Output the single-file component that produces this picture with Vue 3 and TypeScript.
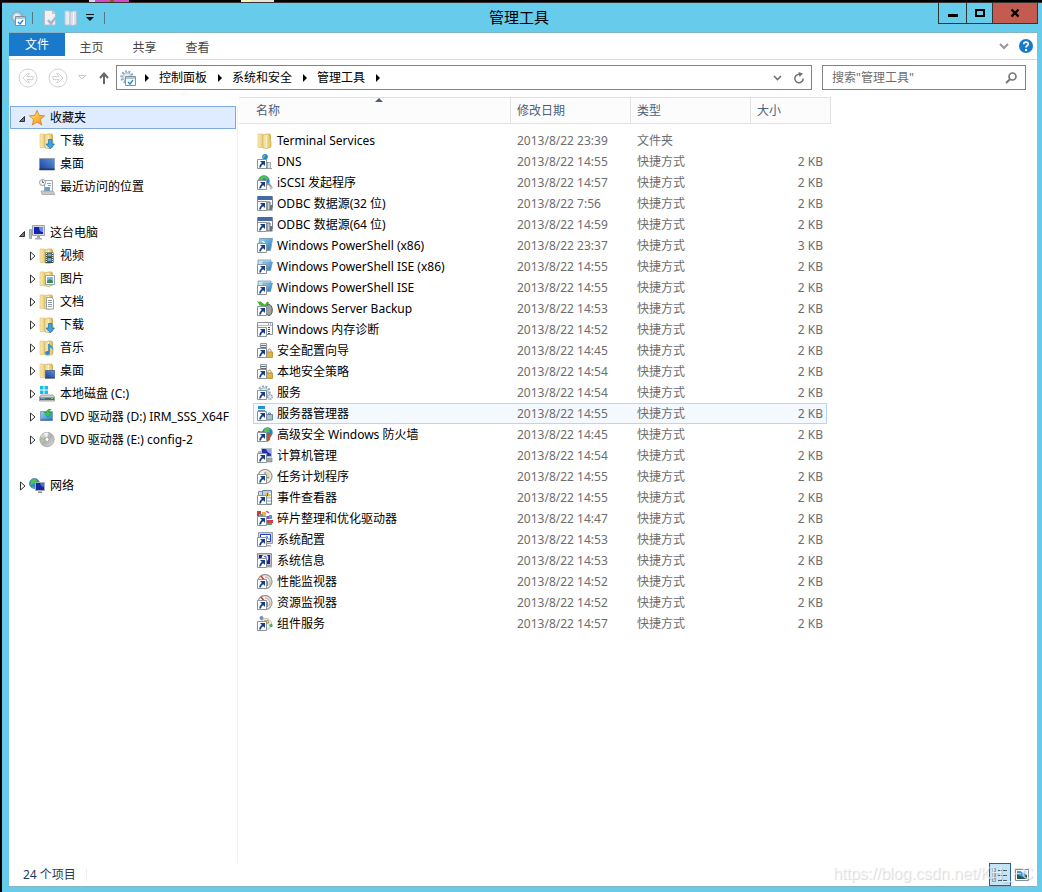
<script setup lang="ts">
import { ref } from 'vue'

interface TreeNode {
  id: string
  label: string
  icon: string
}

interface TreeGroup extends TreeNode {
  open: boolean
  expandable: boolean
  children: TreeNode[]
}

interface FileItem {
  name: string
  date: string
  icon: string
  kind: 'folder' | 'shortcut'
  size: string
}

const tabs = ['主页', '共享', '查看']
const crumbs = ['控制面板', '系统和安全', '管理工具']
const query = ref('')
const selectedNode = ref('fav')
const selectedFile = ref('服务器管理器')

const groups: TreeGroup[] = [
  {
    id: 'fav',
    label: '收藏夹',
    icon: 'star',
    open: true,
    expandable: false,
    children: [
      { id: 'fav-dl', label: '下载', icon: 'f-download' },
      { id: 'fav-desk', label: '桌面', icon: 'desktop' },
      { id: 'fav-recent', label: '最近访问的位置', icon: 'recent' },
    ],
  },
  {
    id: 'pc',
    label: '这台电脑',
    icon: 'pc',
    open: true,
    expandable: true,
    children: [
      { id: 'video', label: '视频', icon: 'f-video' },
      { id: 'pic', label: '图片', icon: 'f-picture' },
      { id: 'doc', label: '文档', icon: 'f-doc' },
      { id: 'dl', label: '下载', icon: 'f-download' },
      { id: 'music', label: '音乐', icon: 'f-music' },
      { id: 'desk', label: '桌面', icon: 'f-desktop' },
      { id: 'c', label: '本地磁盘 (C:)', icon: 'disk' },
      { id: 'd', label: 'DVD 驱动器 (D:) IRM_SSS_X64F', icon: 'dvd-setup' },
      { id: 'e', label: 'DVD 驱动器 (E:) config-2', icon: 'dvd' },
    ],
  },
  { id: 'net', label: '网络', icon: 'network', open: false, expandable: true, children: [] },
]

const shortcut = (name: string, time: string, icon: string, size = '2 KB'): FileItem => ({
  name,
  date: `2013/8/22 ${time}`,
  icon,
  kind: 'shortcut',
  size,
})

const files: FileItem[] = [
  { name: 'Terminal Services', date: '2013/8/22 23:39', icon: 'folder', kind: 'folder', size: '' },
  shortcut('DNS', '14:55', 'dns'),
  shortcut('iSCSI 发起程序', '14:57', 'iscsi'),
  shortcut('ODBC 数据源(32 位)', '7:56', 'odbc'),
  shortcut('ODBC 数据源(64 位)', '14:59', 'odbc'),
  shortcut('Windows PowerShell (x86)', '23:37', 'ps', '3 KB'),
  shortcut('Windows PowerShell ISE (x86)', '14:55', 'ise'),
  shortcut('Windows PowerShell ISE', '14:55', 'ise'),
  shortcut('Windows Server Backup', '14:53', 'backup'),
  shortcut('Windows 内存诊断', '14:52', 'memory'),
  shortcut('安全配置向导', '14:45', 'lock'),
  shortcut('本地安全策略', '14:54', 'lock'),
  shortcut('服务', '14:54', 'services'),
  shortcut('服务器管理器', '14:55', 'server'),
  shortcut('高级安全 Windows 防火墙', '14:45', 'firewall'),
  shortcut('计算机管理', '14:54', 'manage'),
  shortcut('任务计划程序', '14:55', 'clock'),
  shortcut('事件查看器', '14:55', 'event'),
  shortcut('碎片整理和优化驱动器', '14:47', 'defrag'),
  shortcut('系统配置', '14:53', 'config'),
  shortcut('系统信息', '14:53', 'info'),
  shortcut('性能监视器', '14:52', 'gauge'),
  shortcut('资源监视器', '14:52', 'gauge'),
  shortcut('组件服务', '14:57', 'component'),
]
</script>

<template>
  <div class="screen">
    <svg class="sprite" aria-hidden="true">
      <defs>
        <linearGradient id="gold" x1="0" x2="1"><stop offset="0" stop-color="#f9ecb8" /><stop offset="1" stop-color="#e2c468" /></linearGradient>
        <linearGradient id="blue" x1="0" y1="1" x2="1" y2="0"><stop offset="0" stop-color="#1c3f94" /><stop offset="1" stop-color="#5b94e6" /></linearGradient>
        <linearGradient id="cyan" x1="0" y1="0" x2="1" y2="1"><stop offset="0" stop-color="#9bd6f2" /><stop offset="1" stop-color="#1f78c4" /></linearGradient>
        <linearGradient id="starfill" x1="0" y1="0" x2="1" y2="1"><stop offset="0" stop-color="#fff3a0" /><stop offset=".5" stop-color="#ffbe3c" /><stop offset="1" stop-color="#f08018" /></linearGradient>
        <linearGradient id="metal" x1="0" y1="0" x2="1" y2="1"><stop offset="0" stop-color="#f4f4f4" /><stop offset=".5" stop-color="#b0b0b0" /><stop offset="1" stop-color="#dedede" /></linearGradient>

        <symbol id="arrow" viewBox="0 0 16 16">
          <path d="M.5 5.500h9v9h-9z" fill="#fff" stroke="#8d9299" />
          <path d="M3 7h5v5z" fill="#143f86" />
          <path d="M6.500 9C4.500 9.800 3.300 11 3 13.500" fill="none" stroke="#143f86" stroke-width="1.700" />
        </symbol>
        <symbol id="folder" viewBox="0 0 16 16">
          <path d="M1 1h4l2 1v12.500H1z" fill="url(#gold)" stroke="#dfc26b" stroke-width=".6" />
          <path d="M6 2l3-1h4v6l1 1v6l-4 1.500-4-.5z" fill="url(#gold)" stroke="#c9a548" stroke-width=".6" />
          <path d="M9.500 2v13" stroke="#fff2bf" />
          <path d="M12 2h1.500v5" stroke="#d3b256" fill="none" />
        </symbol>
        <symbol id="f-download" viewBox="0 0 16 16">
          <use href="#folder" /><path d="M9.500 6.500h3.500v4.500h2.500L11.300 15.800 7 11h2.500z" fill="#37a5ea" stroke="#1669ad" stroke-width=".7" />
        </symbol>
        <symbol id="f-video" viewBox="0 0 16 16">
          <use href="#folder" /><path d="M6.500 4.500h8v10.500h-8z" fill="#3b4248" />
          <path d="M8.500 5.500h4v3.500h-4zM8.500 10h4v4h-4z" fill="#6ba9d3" /><path d="M8.500 8h4v1h-4zM8.500 13h4v1h-4z" fill="#476b35" />
          <path d="M7.500 5v10M13.500 5v10" stroke="#e6e6e6" stroke-dasharray="1 1" />
        </symbol>
        <symbol id="f-picture" viewBox="0 0 16 16">
          <use href="#folder" /><path d="M6.500 4.500h9v9h-9z" fill="#fff" stroke="#8ba7b7" />
          <path d="M8 6h6v6H8z" fill="#79bbe7" /><path d="M8 10l3-2 3 2v2H8z" fill="#448954" />
        </symbol>
        <symbol id="f-doc" viewBox="0 0 16 16">
          <use href="#folder" /><path d="M7.500 3.500h5l2 2v9.500h-7z" fill="#fff" stroke="#9aa4aa" />
          <path d="M9 6.500h4M9 8.500h4M9 10.500h4M9 12.500h4" stroke="#8e9ba3" />
        </symbol>
        <symbol id="f-music" viewBox="0 0 16 16">
          <use href="#folder" /><path d="M10 4v8" stroke="#1676c5" stroke-width="1.500" /><path d="M10 3c1 2.500 5 3 4 7-1-2-2.500-2.500-4-3z" fill="#2e9ee8" /><ellipse cx="8.500" cy="13" rx="2.500" ry="2" fill="#2389d8" />
        </symbol>
        <symbol id="f-desktop" viewBox="0 0 16 16">
          <use href="#folder" /><path d="M6.500 7.500h9v7h-9z" fill="url(#blue)" stroke="#53719c" /><path d="M6 15h10" stroke="#182b4d" />
        </symbol>
        <symbol id="desktop" viewBox="0 0 16 16">
          <path d="M.5 2.500h15v11.500H.5z" fill="url(#blue)" stroke="#8f9eb4" /><path d="M.5 12.500h15v1.500H.5z" fill="#223e6b" />
        </symbol>
        <symbol id="recent" viewBox="0 0 16 16">
          <path d="M5.500 1.500h8v11h-8z" fill="#f5f8fa" stroke="#a4abb0" /><path d="M8 4.500h4M9 6.500h3" stroke="#92a4b5" /><path d="M6 8h5v4H6z" fill="#62a5d3" />
          <path d="M2 12h12l2 3.500H3z" fill="#c4c8cb" stroke="#8e9498" stroke-width=".6" />
          <circle cx="3.500" cy="3.500" r="3" fill="#f6f6f6" stroke="#929a9f" /><path d="M3.500 1.500v2H5" fill="none" stroke="#646d75" />
        </symbol>
        <symbol id="star" viewBox="0 0 16 16">
          <path d="M8 .3l2.100 5 5.500.5-4.200 3.700 1.300 5.500L8 12.100l-4.700 2.900 1.300-5.500L.4 5.800l5.500-.5z" fill="url(#starfill)" stroke="#d57b20" stroke-width=".8" />
        </symbol>
        <symbol id="pc" viewBox="0 0 16 16">
          <path d="M.5 4.500h2v9h-2z" fill="#b7bdc3" stroke="#83898f" stroke-width=".7" /><path d="M.5 8h2" stroke="#61d044" />
          <path d="M3.500.5h12v10h-12z" fill="#d5d8dc" stroke="#9da3aa" /><path d="M5 2h9v7H5z" fill="#1624b2" /><path d="M10 2h4v5c-2 0-4-1-4-5z" fill="#738ce5" />
          <path d="M8 11h3v2h2v1.500H6V13h2z" fill="#a5abb1" />
        </symbol>
        <symbol id="disk" viewBox="0 0 16 16">
          <path d="M1 0h3.500v3.500H1zM5.500 0H9v3.500H5.500zM1 4.500h3.500V8H1zM5.500 4.500H9V8H5.500z" fill="#16bdf3" />
          <path d="M2 9h12l1.500 2v4H.5v-4z" fill="#d0d3d6" stroke="#85898d" stroke-width=".7" /><path d="M1 11.500h14V14H1z" fill="#566571" /><path d="M2 12h4v1H2z" fill="#72a8bf" /><path d="M12 12h2v1h-2z" fill="#57df55" />
        </symbol>
        <symbol id="dvd-setup" viewBox="0 0 16 16">
          <path d="M1.500 2.500h12v9h-12z" fill="url(#cyan)" stroke="#8aa0c2" /><path d="M1.500 11h12" stroke="#46619b" />
          <path d="M12 0C9 0 7.500 1.500 7.500 3.500H5L9 8l3.500-4.500H10C10 2 10.800 1 12 .5z" fill="#3cc84e" stroke="#178a2a" stroke-width=".6" />
        </symbol>
        <symbol id="dvd" viewBox="0 0 16 16">
          <circle cx="8" cy="7.500" r="7.200" fill="url(#metal)" stroke="#979797" stroke-width=".7" /><path d="M8 7.500L1.500 4.500 1 8.500z" fill="#83c76b" opacity=".6" /><path d="M8 7.500L5 1 9 .5z" fill="#fff" opacity=".8" /><circle cx="8" cy="7.500" r="2" fill="#fff" stroke="#999" stroke-width=".7" />
        </symbol>
        <symbol id="network" viewBox="0 0 16 16">
          <circle cx="5.500" cy="5.500" r="5" fill="#2a8bd6" stroke="#2b6ca4" stroke-width=".6" /><path d="M2 2.500C4 .5 7 1 8 2L6 5 3 6 1 8zM3 8l3 2-2 .5z" fill="#55c34b" />
          <path d="M6.500 4.500h9v8h-9z" fill="#15269f" stroke="#a6adb7" /><path d="M11 5h4v4c-2 0-3-1-4-4z" fill="#526ed2" /><path d="M9 13.500h4v1.500H9z" fill="#858d98" />
        </symbol>

        <symbol id="dns" viewBox="0 0 16 16">
          <path d="M7.500 4.500v4h5" stroke="#8a9096" fill="none" /><circle cx="8" cy="2.800" r="2.800" fill="#267fca" /><path d="M6 1.500l3-1-1 2.500-2 2z" fill="#55c94f" /><path d="M10.500 8.500h3v6h-3z" fill="#dce4ea" stroke="#9098a0" stroke-width=".8" /><path d="M9 14.500h6" stroke="#94999e" />
          <use href="#arrow" />
        </symbol>
        <symbol id="iscsi" viewBox="0 0 16 16">
          <circle cx="7" cy="6" r="5.700" fill="#2783ce" /><path d="M2 3C5-1 10 0 12 4l-2 1-3-2-2 3-4 1z" fill="#51bd53" /><path d="M9 9h3l3 4" stroke="#929aa0" stroke-width="2" fill="none" /><circle cx="14" cy="13" r="1.500" fill="#b8c4c9" />
          <use href="#arrow" />
        </symbol>
        <symbol id="odbc" viewBox="0 0 16 16">
          <path d="M.5.5h15v11H.5z" fill="#f8fafb" stroke="#7b8795" /><path d="M1 0h14v4H1z" fill="#4669a9" /><path d="M10 6h3v8h-3z" fill="#c9ced2" stroke="#656f77" /><path d="M13 9h2.500v5.500H13z" fill="#687680" />
          <use href="#arrow" />
        </symbol>
        <symbol id="ps" viewBox="0 0 16 16">
          <path d="M2.500.5h13l-2 12h-12z" fill="url(#cyan)" stroke="#7fa1be" /><path d="M5 3l4 3-5 4" stroke="#eefaff" stroke-width="1.500" fill="none" />
          <use href="#arrow" />
        </symbol>
        <symbol id="ise" viewBox="0 0 16 16">
          <path d="M1 1h13l-2 9H1z" fill="#bfe0f1" stroke="#6e9aba" stroke-width=".8" /><path d="M6 3h9.500l-2 8.500H6z" fill="url(#cyan)" stroke="#638dab" stroke-width=".6" />
          <use href="#arrow" />
        </symbol>
        <symbol id="backup" viewBox="0 0 16 16">
          <path d="M5 6l-1-4 4 3 3-4-1 5" fill="none" stroke="#44af32" stroke-width="1.800" /><path d="M0 0l5 2-2 3z" fill="#44af32" /><ellipse cx="12" cy="9" rx="3.300" ry="5.500" fill="#9ca2a5" stroke="#53585b" /><path d="M12 8l2 1-2 2z" fill="#e29b4f" />
          <use href="#arrow" />
        </symbol>
        <symbol id="memory" viewBox="0 0 16 16">
          <path d="M.5.500h15v12H.5z" fill="#fbfbfb" stroke="#8a949c" /><path d="M1 3.500h14" stroke="#b5bec5" /><path d="M11 2h4" stroke="#53616c" stroke-dasharray="1 1" /><path d="M12 5v8" stroke="#45515b" stroke-width="2" stroke-dasharray="1 1" />
          <use href="#arrow" />
        </symbol>
        <symbol id="lock" viewBox="0 0 16 16">
          <path d="M3.500.5h6v13h-6z" fill="#e8ecef" stroke="#929a9f" /><path d="M4 2.500h5M4 4.500h5" stroke="#626e76" /><path d="M11 9V7.500c0-2 3-2 3 0V9" fill="none" stroke="#9b8540" /><path d="M9.500 9h6v5.500h-6z" fill="#e0b23f" stroke="#a98122" stroke-width=".7" />
          <use href="#arrow" />
        </symbol>
        <symbol id="gear" viewBox="0 0 16 16">
          <circle cx="7" cy="7" r="5.700" fill="none" stroke="#8fadc4" stroke-width="2" stroke-dasharray="2 1.450" /><circle cx="7" cy="7" r="4.300" fill="#dce9f2" stroke="#9bb5ca" /><circle cx="7" cy="7" r="1.800" fill="#fff" />
        </symbol>
        <symbol id="services" viewBox="0 0 16 16">
          <use href="#gear" /><circle cx="13" cy="12" r="2.300" fill="#dbe6ed" stroke="#91a8b9" stroke-width="1.500" stroke-dasharray="1.200 .6" /><use href="#arrow" />
        </symbol>
        <symbol id="server" viewBox="0 0 16 16">
          <path d="M1 0h7v3H1z" fill="#2590d5" /><path d="M1 4h7v2H1z" fill="#718da8" /><path d="M9.500 8.500h6v5.500h-6z" fill="#a9c0d3" stroke="#6e8497" /><path d="M11.500 8V7h2v1" fill="none" stroke="#63798b" />
          <use href="#arrow" />
        </symbol>
        <symbol id="firewall" viewBox="0 0 16 16">
          <path d="M1 4h8v7H1z" fill="#b85f3b" /><path d="M1 6h8M4 4v3" stroke="#e7c9b9" /><circle cx="10.500" cy="5.500" r="5.200" fill="#2685ce" /><path d="M7 3c2-3 5-2 6-1l-1 3-3 1-1 3z" fill="#5bbf54" /><path d="M10 7h4l-1 6-3 2z" fill="#b95d31" />
          <use href="#arrow" />
        </symbol>
        <symbol id="manage" viewBox="0 0 16 16">
          <path d="M4.500.5h10v8h-10z" fill="#2030b0" stroke="#b6bdc4" /><path d="M9 1h5v5c-2-1-4-2-5-5z" fill="#8ca2e9" /><path d="M1 3h3v3H1z" fill="#aeb6bd" /><path d="M10 10h5v4h-5z" fill="#a3abb2" stroke="#727c85" stroke-width=".6" />
          <use href="#arrow" />
        </symbol>
        <symbol id="clock" viewBox="0 0 16 16">
          <circle cx="8" cy="7.500" r="7" fill="#f4efe1" stroke="#929699" stroke-width="1.200" /><path d="M8 8V2a6 6 0 0 1 5 8z" fill="#e2d3a8" /><path d="M8 3v5l4 1" fill="none" stroke="#728798" />
          <use href="#arrow" />
        </symbol>
        <symbol id="event" viewBox="0 0 16 16">
          <path d="M1.500 1.500h4v10h-4z" fill="#cbd7e2" stroke="#8493a2" /><path d="M5.500.5h9v14h-9z" fill="#bcd0e3" stroke="#70849a" /><path d="M10 3.500h4M10 6.500h4M10 9.500h4M10 12.500h4" stroke="#fff" /><path d="M10.500 1.500l3 5h-6z" fill="#f0bf25" /><path d="M10.500 3v3" stroke="#756117" />
          <use href="#arrow" />
        </symbol>
        <symbol id="defrag" viewBox="0 0 16 16">
          <path d="M0 0h4v5H0z" fill="#c73d3e" /><path d="M5 1h4v4H5z" fill="#e4b738" /><path d="M2 3h4v2H2z" fill="#8c8d92" /><path d="M9 0l3 2" stroke="#b83ee0" stroke-width="1.500" /><path d="M10 5h3v3h-3z" fill="#9b3ddb" /><path d="M12 4h3v4h-3z" fill="#34acc1" /><path d="M10 9h6v3h-6z" fill="#d73b48" /><path d="M10 12h5v2h-5z" fill="#3bb457" />
          <use href="#arrow" />
        </symbol>
        <symbol id="config" viewBox="0 0 16 16">
          <path d="M1.500.5h14v11h-14z" fill="#d0d2d5" stroke="#999da3" /><path d="M3.500 2.500h10v7h-10z" fill="#fff" stroke="#213ec2" /><path d="M8 8l2-4 1 3h2" fill="none" stroke="#4796e0" /><path d="M9 13h5v1.500H9z" fill="#a7aaad" />
          <use href="#arrow" />
        </symbol>
        <symbol id="info" viewBox="0 0 16 16">
          <path d="M.5.5h14v12H.5z" fill="#c4c5cc" stroke="#8f929b" /><path d="M2 2h11v9H2z" fill="#1a249c" /><circle cx="8" cy="5" r="3.300" fill="#e9edff" /><path d="M7 4c1.500-2 3 .5 1.200 1.500V8" fill="none" stroke="#2638b3" /><path d="M9 13h6v1.500H9z" fill="#a7aaad" />
          <use href="#arrow" />
        </symbol>
        <symbol id="gauge" viewBox="0 0 16 16">
          <circle cx="8" cy="7.500" r="7" fill="#f7f5f2" stroke="#9b9b9b" stroke-width="1.300" /><path d="M8 3a5 5 0 0 1 4 8" fill="none" stroke="#c6beb8" stroke-width="1.500" /><path d="M4 2l4 5" stroke="#d72920" stroke-width="1.500" /><path d="M10.500 12V7" stroke="#cf7648" stroke-width="1.200" />
          <use href="#arrow" />
        </symbol>
        <symbol id="component" viewBox="0 0 16 16">
          <circle cx="9" cy="8" r="5.500" fill="#eff1f2" stroke="#bac1c6" /><circle cx="4.500" cy="2" r="2" fill="#7d88c9" /><circle cx="14" cy="9.500" r="1.700" fill="#55ae54" /><path d="M7 5l4-1 1 3-4 1z" fill="#ecc656" stroke="#9b8237" stroke-width=".6" />
          <use href="#arrow" />
        </symbol>
        <symbol id="tools" viewBox="0 0 16 16">
          <use href="#gear" /><path d="M5.500 6.500h10v9h-10z" fill="#fff" stroke="#82909c" /><path d="M6 7h9v2H6z" fill="#b4c6d4" /><path d="M8 12l2 2 3-4" fill="none" stroke="#1989ce" stroke-width="1.300" />
        </symbol>
      </defs>
    </svg>

    <div class="behind"></div>
    <main class="window">
      <header class="titlebar">
        <div class="quick">
          <svg class="i16"><use href="#tools" /></svg>
          <span class="bar"></span>
          <button class="plain props" type="button" aria-label="属性">
            <svg class="i16" viewBox="0 0 16 16"><path d="M2.500.5h8l3 3v11.500h-11z" fill="#eef2f7" stroke="#b6bdc9" /><path d="M10.500.5v3h3" fill="#d4dce6" stroke="#b6bdc9" /><path d="M6 10l3 3.500 5-6.500" stroke="#aab5c9" stroke-width="2.500" fill="none" /></svg>
          </button>
          <button class="plain" type="button" aria-label="新建文件夹">
            <svg class="i16" viewBox="0 0 16 16"><path d="M2 1h4l1 1v13H2z" fill="#e6ebf3" stroke="#bdc7d6" /><path d="M7 2l3-1h3.500v13.500L10 15.500 7 15z" fill="#d7dfec" stroke="#b4bfd2" /><path d="M10.500 2v13" stroke="#f4f7fb" /></svg>
          </button>
          <button class="plain customize" type="button" aria-label="自定义快速访问工具栏">
            <svg width="8" height="7" viewBox="0 0 8 7"><path d="M0 .5h8" stroke="#111" /><path d="M0 3h8L4 7z" fill="#111" /></svg>
          </button>
          <span class="bar"></span>
        </div>
        <h1>管理工具</h1>
        <div class="controls">
          <button type="button" class="min" aria-label="最小化"><svg width="10" height="10"><path d="M0 6h10v3H0z" /></svg></button>
          <button type="button" class="max" aria-label="最大化"><svg width="10" height="10"><path d="M1 2h8v6H1z" fill="none" stroke="#000" stroke-width="2" /></svg></button>
          <button type="button" class="close" aria-label="关闭"><svg width="10" height="10"><path d="M1.500 1.500l7 7M8.500 1.500l-7 7" stroke="#000" stroke-width="2.400" /></svg></button>
        </div>
      </header>

      <div class="client">
        <nav class="ribbon">
          <button type="button" class="file">文件</button>
          <button v-for="tab in tabs" :key="tab" type="button" class="tab">{{ tab }}</button>
          <button type="button" class="plain expand" aria-label="展开功能区"><svg width="10" height="7"><path d="M1 1l4 4 4-4" fill="none" stroke="#999" stroke-width="2" /></svg></button>
          <button type="button" class="plain" aria-label="帮助">
            <svg width="14" height="14" viewBox="0 0 14 14"><circle cx="7" cy="7" r="7" fill="#1979ca" /><path d="M4.700 5.300c0-3 4.800-2.800 4.600-.2C9.200 6.600 7 6.500 7 8.600" fill="none" stroke="#fff" stroke-width="1.600" /><path d="M6 10h2v2H6z" fill="#fff" /></svg>
          </button>
        </nav>

        <div class="location">
          <button type="button" class="plain" aria-label="后退" disabled>
            <svg width="20" height="20" viewBox="0 0 20 20" fill="none" stroke="#d2d2d2"><circle cx="10" cy="10" r="9" /><path d="M5 10l4.500-4.500h2L9 8.500h6v3H9l2.500 3h-2z" /></svg>
          </button>
          <button type="button" class="plain forward" aria-label="前进" disabled>
            <svg width="20" height="20" viewBox="0 0 20 20" fill="none" stroke="#d2d2d2"><circle cx="10" cy="10" r="9" /><path d="M15 10l-4.500-4.500h-2l2.500 3H5v3h6l-2.500 3h2z" /></svg>
          </button>
          <button type="button" class="plain history" aria-label="最近位置" disabled><svg width="8" height="5"><path d="M.5.5h7L4 4z" fill="none" stroke="#ccc" /></svg></button>
          <button type="button" class="plain up" aria-label="上移"><svg width="10" height="12"><path d="M5 12V1.500M1 6l4-4.500L9 6" fill="none" stroke="#666" stroke-width="2" /></svg></button>
          <div class="address">
            <svg class="i16"><use href="#tools" /></svg>
            <template v-for="crumb in crumbs" :key="crumb">
              <svg class="sep" width="4" height="8"><path d="M0 0l4 4-4 4z" /></svg>
              <a href="#">{{ crumb }}</a>
            </template>
            <svg class="sep" width="4" height="8"><path d="M0 0l4 4-4 4z" /></svg>
            <button type="button" class="plain drop" aria-label="以前的位置"><svg width="9" height="6"><path d="M1 1l3.500 3.500L8 1" fill="none" stroke="#707070" stroke-width="1.600" /></svg></button>
            <button type="button" class="plain" aria-label="刷新"><svg width="12" height="12"><path d="M7.500 2.600A4.200 4.200 0 1 0 10.200 6.500" fill="none" stroke="#707070" stroke-width="1.500" /><path d="M5.500 0l4.500 1.500L6.500 5z" fill="#707070" /></svg></button>
          </div>
          <label class="search">
            <input v-model="query" type="text" placeholder='搜索"管理工具"' aria-label="搜索" />
            <svg width="12" height="12"><circle cx="7.500" cy="4.500" r="3.500" fill="none" stroke="#777" stroke-width="1.700" /><path d="M5 7.300L1 11" stroke="#777" stroke-width="2" /></svg>
          </label>
        </div>

        <div class="body">
          <nav class="tree">
            <ul>
              <li v-for="group in groups" :key="group.id" class="group">
                <button type="button" class="node" :class="{ active: selectedNode === group.id }" @click="selectedNode = group.id">
                  <svg class="twist" width="7" height="10">
                    <path v-if="group.open" d="M5.500 3.500v5h-5z" fill="#777" stroke="#333" />
                    <path v-else d="M1.500 1v8L6 5z" fill="#fff" stroke="#333" />
                  </svg>
                  <svg class="i16"><use :href="'#' + group.icon" /></svg>
                  <span>{{ group.label }}</span>
                </button>
                <ul v-if="group.open">
                  <li v-for="node in group.children" :key="node.id">
                    <button type="button" class="node child" :class="{ active: selectedNode === node.id }" @click="selectedNode = node.id">
                      <svg class="twist" width="7" height="10"><path v-if="group.expandable" d="M1.500 1v8L6 5z" fill="#fff" stroke="#333" /></svg>
                      <svg class="i16"><use :href="'#' + node.icon" /></svg>
                      <span>{{ node.label }}</span>
                    </button>
                  </li>
                </ul>
              </li>
            </ul>
          </nav>

          <section class="files">
            <table>
              <colgroup><col class="c-name" /><col class="c-date" /><col class="c-type" /><col class="c-size" /></colgroup>
              <thead>
                <tr>
                  <th scope="col" class="sorted">名称<svg class="asc" width="8" height="4"><path d="M0 4l4-4 4 4z" /></svg></th>
                  <th scope="col">修改日期</th>
                  <th scope="col">类型</th>
                  <th scope="col">大小</th>
                </tr>
              </thead>
              <tbody>
                <tr v-for="file in files" :key="file.name" :class="{ active: selectedFile === file.name }" @click="selectedFile = file.name">
                  <td class="name"><div class="cell"><svg class="i16"><use :href="'#' + file.icon" /></svg>{{ file.name }}</div></td>
                  <td>{{ file.date }}</td>
                  <td>{{ file.kind === 'folder' ? '文件夹' : '快捷方式' }}</td>
                  <td class="size">{{ file.size }}</td>
                </tr>
              </tbody>
            </table>
          </section>
        </div>

        <footer class="status">
          <span class="count">{{ files.length }} 个项目</span>
          <div class="views">
            <button type="button" class="view on" aria-label="详细信息">
              <svg width="16" height="14" viewBox="0 0 16 14"><g fill="#fff" stroke="#7d8d9b" stroke-width=".8"><path d="M.5.5h3v3h-3zM.5 5.500h3v3h-3zM.5 10.500h3v3h-3z" /></g><path d="M1.500 2h1M1.500 12h1" stroke="#3572b6" /><path d="M1.500 7h1" stroke="#d22" stroke-width="1.500" /><path d="M6 2.500h4M11 2.500h4M6 7.500h4M11 7.500h4M6 12.500h4M11 12.500h4" stroke="#4f5e6c" /></svg>
            </button>
            <button type="button" class="view" aria-label="大缩略图">
              <svg width="14" height="12" viewBox="0 0 14 12"><path d="M.5.5h13v11H.5z" fill="#fff" stroke="#8191a4" /><path d="M2 2h10v8H2z" fill="#4c92d5" /><path d="M5 2h7v4z" fill="#d5efff" /><path d="M2 5l5 3 5-2v4H2z" fill="#28564c" /></svg>
            </button>
          </div>
          <span class="mark">https://blog.csdn.net/KH_FC</span>
        </footer>
      </div>
    </main>
  </div>
</template>

<style>
body {
  margin: 0;
  background: #000;
}
</style>

<style scoped>
.screen {
  display: flex;
  flex-direction: column;
  min-height: 100vh;
  box-sizing: border-box;
  padding-left: 2px;
  background: #000;
  color: #000;
  font: 12px/20px "Noto Sans", "Noto Sans CJK SC", sans-serif;
}

.sprite {
  position: absolute;
  width: 0;
  height: 0;
}

.behind {
  height: 2px;
  border-bottom: 1px solid #333;
  background:
    linear-gradient(90deg, #dcd3f2 6px, #d44bc3 6px 21px, #8c5a20 21px 25px, #d44bc3 25px) 87px 0 / 40px 2px no-repeat,
    linear-gradient(90deg, #fbf7ba 10px, #e8e5d8 10px) 239px 0 / 33px 2px no-repeat;
}

.window {
  flex: 1;
  display: flex;
  flex-direction: column;
  padding: 0 5px 5px 7px;
  background: #67cbeb;
}

button,
input {
  font: inherit;
  color: inherit;
}

.plain {
  display: flex;
  padding: 0;
  border: 0;
  background: none;
}

.i16 {
  width: 16px;
  height: 16px;
  flex: none;
}

.titlebar {
  display: grid;
  grid-template-columns: 1fr auto 1fr;
  align-items: center;
  height: 29px;
  margin-right: -1px;
  border-bottom: 1px solid #83b3c6;
}

.titlebar h1 {
  margin: 0;
  padding: 0 9px 2px 0;
  font-size: 15px;
  font-weight: 400;
}

.quick {
  display: flex;
  align-items: center;
  gap: 5px;
  padding-left: 1px;
}

.bar {
  width: 1px;
  height: 12px;
  margin-left: 1px;
  background: #54788a;
}

.props {
  margin-left: 4px;
}

.customize {
  margin: 0 4px 0 2px;
}

.controls {
  display: flex;
  align-self: start;
  justify-self: end;
}

.controls button {
  display: flex;
  align-items: center;
  justify-content: center;
  box-sizing: border-box;
  height: 21px;
  padding: 0;
  border: solid #333;
  border-width: 0 0 1px 1px;
  background: none;
}

.controls .min {
  width: 28px;
}

.controls .max {
  width: 26px;
}

.controls .close {
  width: 46px;
  border-right-width: 1px;
  background: #c35b51;
}

.client {
  flex: 1;
  display: flex;
  flex-direction: column;
  background: #fff;
  border-bottom: 1px solid #83b3c6;
}

.ribbon {
  display: flex;
  align-items: center;
  height: 26px;
  padding-right: 4px;
  border-bottom: 1px solid #dcdcdc;
}

.file,
.tab {
  height: 23px;
  padding: 0;
  border: 0;
  background: none;
}

.tab {
  align-self: end;
  width: 53px;
  color: #444;
}

.file {
  align-self: start;
  width: 56px;
  background: #1979ca;
  color: #fff;
}

.expand {
  margin: 0 10px 0 auto;
}

.location {
  display: flex;
  align-items: center;
  height: 35px;
  padding: 0 11px 2px 9px;
}

.forward {
  margin-left: 10px;
}

.history {
  margin-left: 10px;
}

.up {
  margin: 0 7px 0 13px;
}

.address,
.search {
  display: flex;
  align-items: center;
  box-sizing: border-box;
  height: 25px;
  border: 1px solid #838383;
}

.address {
  flex: 1;
  min-width: 0;
  padding: 0 6px 0 3px;
}

.address a {
  margin: 0 2px 0 1px;
  color: #000;
  text-decoration: none;
  white-space: nowrap;
}

.sep {
  flex: none;
  margin: 0 9px;
}

.drop {
  margin: 0 11px 0 auto;
}

.search {
  width: 204px;
  margin-left: 10px;
  padding: 0 8px 0 9px;
}

.search input {
  flex: 1;
  min-width: 0;
  padding: 0;
  border: 0;
  outline: 0;
  background: none;
}

.search input::placeholder {
  color: #6d6d6d;
  opacity: 1;
}

.body {
  flex: 1;
  display: flex;
}

.tree {
  flex: none;
  width: 229px;
  box-sizing: border-box;
  margin-top: 9px;
  padding: 0 1px;
  border-right: 1px solid #f2f2f2;
}

.tree ul {
  margin: 0;
  padding: 0;
  list-style: none;
}

.group {
  margin-bottom: 23px;
}

.node {
  display: flex;
  align-items: center;
  box-sizing: border-box;
  width: 100%;
  height: 23px;
  padding: 0 0 0 8px;
  border: 1px solid transparent;
  border-right-width: 0;
  background: none;
  text-align: left;
}

.node.active {
  border: 1px solid #7da9dc;
  background: #dfecff;
}

.child {
  padding-left: 18px;
}

.twist {
  flex: none;
  margin-right: 3px;
}

.node span {
  margin-left: 5px;
  overflow: hidden;
  white-space: nowrap;
}

.files {
  flex: 1;
  min-width: 0;
  padding-left: 1px;
}

table {
  width: 592px;
  table-layout: fixed;
  border-spacing: 0;
}

.c-name {
  width: 272px;
}

.c-date,
.c-type {
  width: 120px;
}

.c-size {
  width: 80px;
}

th {
  height: 25px;
  padding: 0 0 0 6px;
  border: solid #e2e2e2;
  border-width: 1px 1px 1px 0;
  background: #fcfcfc;
  color: #4c607a;
  font-weight: 400;
  text-align: left;
}

th.sorted {
  position: relative;
  padding-left: 17px;
}

.asc {
  position: absolute;
  top: 0;
  left: 50%;
  fill: #4c607a;
}

tbody::before {
  content: "";
  display: block;
  height: 6px;
}

tbody tr {
  position: relative;
  z-index: 0;
}

tr.active .name::before {
  content: "";
  position: absolute;
  z-index: -1;
  inset: 0 4px 0 14px;
  border: 1px solid #b8d6fb;
  background: #f4f9ff;
}

td {
  height: 21px;
  padding: 0 0 0 6px;
  color: #6d6d6d;
  line-height: 20px;
  white-space: nowrap;
}

td.name {
  padding-left: 18px;
  color: #000;
}

.cell {
  display: flex;
  align-items: center;
  gap: 4px;
}

td.size {
  padding-right: 8px;
  text-align: right;
}

.status {
  position: relative;
  display: flex;
  align-items: center;
  justify-content: space-between;
  height: 23px;
  padding: 0 4px 0 14px;
  color: #1e395b;
}

.count {
  padding-right: 10px;
  border-right: 1px solid #eee;
  line-height: 12px;
}

.views {
  display: flex;
}

.view {
  display: flex;
  align-items: center;
  justify-content: center;
  box-sizing: border-box;
  width: 22px;
  height: 23px;
  padding: 0;
  border: 1px solid transparent;
  background: none;
}

.view.on {
  border-color: #2b5d93;
  background: #c4e3f4;
}

.mark {
  position: absolute;
  right: 4px;
  bottom: 2px;
  color: rgba(255, 255, 255, 0.6);
  font: 16px/20px "Liberation Sans", sans-serif;
  text-shadow: 1px 1px 1px rgba(120, 120, 120, 0.3);
  pointer-events: none;
}
</style>
